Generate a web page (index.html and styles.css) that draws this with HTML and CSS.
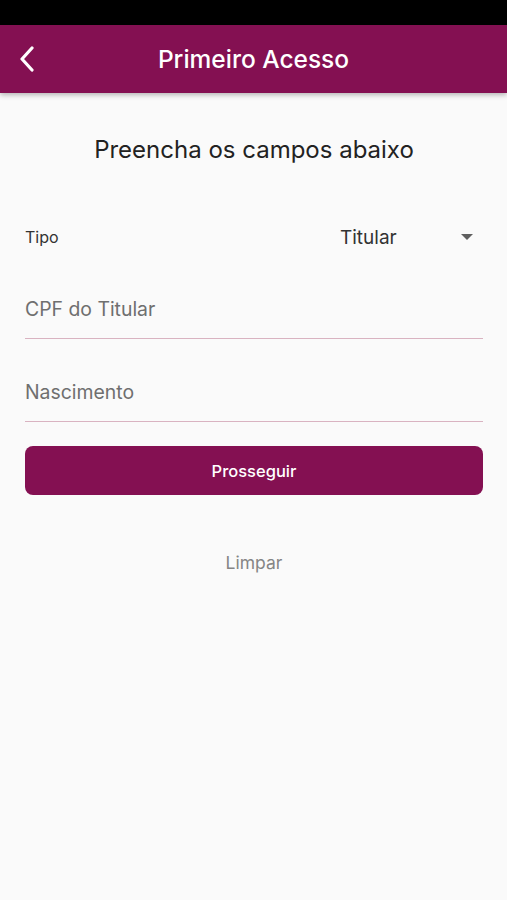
FILE: index.html
```html
<!DOCTYPE html>
<html lang="pt">
  <head>
    <meta charset="UTF-8" />
    <meta name="viewport" content="width=device-width, initial-scale=1.0" />
    <title>Primeiro Acesso</title>
    <link rel="stylesheet" href="styles.css">
  </head>

  <body>
    <div class="statusbar"></div>
    <header class="appbar">
      <button class="back" aria-label="Voltar">
        <svg width="16" height="26" viewBox="0 0 16 26">
          <path d="M13 2 L3 13 L13 24" fill="none" stroke="#fff" stroke-width="3.2" stroke-linecap="round" stroke-linejoin="round" />
        </svg>
      </button>
      <h1>Primeiro Acesso</h1>
    </header>

    <main class="content">
      <h2 class="intro">Preencha os campos abaixo</h2>

      <div class="row-tipo">
        <span class="tipo-label">Tipo</span>
        <div class="select">
          <span>Titular</span>
          <svg width="12" height="6" viewBox="0 0 12 6"><path d="M0 0 H12 L6 6 Z" fill="#5f5f5f" /></svg>
        </div>
      </div>

      <div class="field first">
        <span class="placeholder">CPF do Titular</span>
      </div>
      <div class="field">
        <span class="placeholder">Nascimento</span>
      </div>

      <button class="primary">Prosseguir</button>
      <button class="link">Limpar</button>
    </main>
  </body>
</html>
```

FILE: styles.css
```css
* {
  margin: 0;
  padding: 0;
  box-sizing: border-box;
}

body {
  font-family: Inter, Roboto, sans-serif;
  background-color: #fafafa;
  color: #222;
  height: 900px;
}

.statusbar {
  height: 25px;
  background-color: #000;
}

.appbar {
  position: relative;
  height: 68px;
  background-color: #841052;
  display: flex;
  align-items: center;
  justify-content: center;
  box-shadow: 0 2px 5px rgba(0, 0, 0, 0.28);
}

.appbar h1 {
  color: #fff;
  font-size: 24.5px;
  line-height: 30px;
  font-weight: 500;
}

.back {
  position: absolute;
  left: 19px;
  top: 21px;
  background: none;
  border: none;
  display: flex;
}

.content {
  padding: 0 24px 0 25px;
  display: flex;
  flex-direction: column;
}

.intro {
  font-size: 24px;
  line-height: 30px;
  font-weight: 400;
  text-align: center;
  color: #222;
  margin-top: 42px;
}

.row-tipo {
  display: flex;
  align-items: center;
  justify-content: space-between;
  margin-top: 57px;
  height: 30px;
}

.tipo-label {
  font-size: 16px;
  color: #333;
}

.select {
  display: flex;
  align-items: center;
  width: 143px;
  justify-content: space-between;
  padding-right: 10px;
  font-size: 19px;
  color: #333;
}

.field {
  height: 83px;
  display: flex;
  align-items: flex-end;
  padding-bottom: 17px;
  border-bottom: 1px solid #d9b3c1;
}

.field.first {
  height: 87px;
}

.placeholder {
  font-size: 19.4px;
  line-height: 24px;
  color: #6f6f6f;
}

.primary {
  margin-top: 24px;
  height: 49px;
  border: none;
  border-radius: 8px;
  background-color: #841052;
  color: #fff;
  font-family: Inter, Roboto, sans-serif;
  font-size: 16.5px;
  font-weight: 500;
}

.link {
  margin-top: 57px;
  align-self: center;
  background: none;
  border: none;
  font-family: Inter, Roboto, sans-serif;
  font-size: 17.5px;
  color: #858585;
}
```
